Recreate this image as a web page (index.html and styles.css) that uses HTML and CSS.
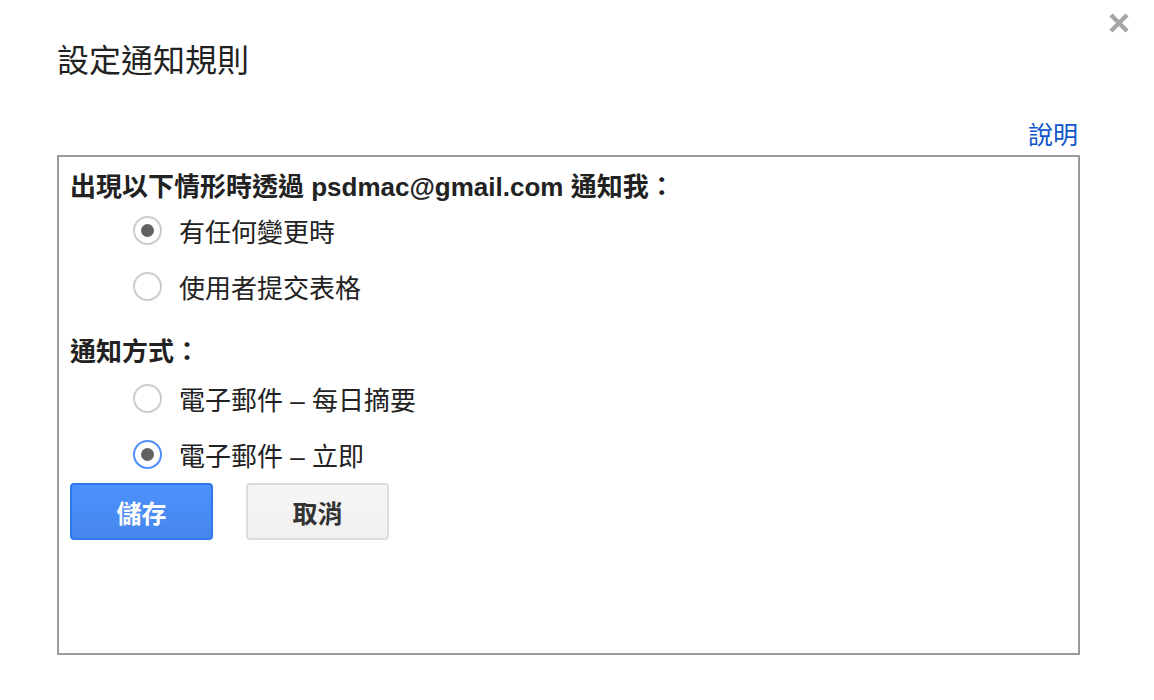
FILE: index.html
```html
<!DOCTYPE html>
<html lang="zh-Hant">
<head>
<meta charset="utf-8">
<title>設定通知規則</title>
<link rel="stylesheet" href="styles.css">
</head>
<body>
<div class="dialog">
  <button class="close" aria-label="關閉">
    <svg width="22" height="22" viewBox="0 0 22 22"><path d="M3 3 L19 19 M19 3 L3 19" stroke="#a6a6a6" stroke-width="4.5" stroke-linecap="butt"/></svg>
  </button>
  <h1 class="title">設定通知規則</h1>
  <div class="help-row"><a class="help" href="#">說明</a></div>
  <div class="box">
    <div class="heading">出現以下情形時透過 <span class="email">psdmac@gmail.com</span> 通知我：</div>
    <label class="option"><span class="radio checked"></span><span class="label">有任何變更時</span></label>
    <label class="option"><span class="radio"></span><span class="label">使用者提交表格</span></label>
    <div class="heading heading-2">通知方式：</div>
    <label class="option"><span class="radio"></span><span class="label">電子郵件 – 每日摘要</span></label>
    <label class="option"><span class="radio checked focused"></span><span class="label">電子郵件 – 立即</span></label>
    <div class="buttons">
      <button class="btn btn-primary">儲存</button>
      <button class="btn btn-default">取消</button>
    </div>
  </div>
</div>
</body>
</html>
```
FILE: styles.css
```css
html, body {
  margin: 0;
  padding: 0;
  background: #fff;
}
body {
  font-family: "Liberation Sans", "Noto Sans CJK TC", Arial, sans-serif;
  color: #222;
}
.dialog {
  position: relative;
  padding: 0 74px 0 57px;
}
.close {
  position: absolute;
  top: 12px;
  right: 24px;
  width: 22px;
  height: 22px;
  padding: 0;
  border: 0;
  background: none;
  cursor: pointer;
}
.close svg { display: block; }
.title {
  margin: 0;
  padding-top: 41px;
  font-size: 32px;
  line-height: 40px;
  font-weight: normal;
  color: #222;
}
.help-row {
  margin-top: 40px;
  height: 34px;
  text-align: right;
}
.help {
  margin-right: 2px;
  font-size: 25px;
  line-height: 28px;
  color: #1155cc;
  text-decoration: none;
}
.box {
  box-sizing: border-box;
  height: 500px;
  border: 2px solid #9a9a9a;
  padding: 15px 11px 0;
}
.heading {
  font-size: 26px;
  line-height: 30px;
  font-weight: bold;
  color: #222;
  white-space: nowrap;
}
.heading-2 {
  margin-top: 23px;
  margin-bottom: 3px;
}
.option {
  display: flex;
  align-items: center;
  height: 56px;
  padding-left: 63px;
  font-size: 26px;
  color: #222;
}
.radio {
  box-sizing: border-box;
  position: relative;
  width: 29px;
  height: 29px;
  border: 2px solid #cdcdcd;
  border-radius: 50%;
  background: #fff;
  flex: none;
  margin-right: 17px;
}
.radio.checked::after {
  content: "";
  position: absolute;
  left: 50%;
  top: 50%;
  width: 13px;
  height: 13px;
  margin: -6.5px 0 0 -6.5px;
  border-radius: 50%;
  background: #616161;
}
.radio.focused {
  border-color: #4d90fe;
}
.buttons {
  display: flex;
  gap: 33px;
  margin-top: 1px;
}
.btn {
  box-sizing: border-box;
  width: 143px;
  height: 57px;
  border-radius: 4px;
  font-family: "Noto Sans CJK TC", sans-serif;
  font-size: 25px;
  font-weight: bold;
  padding: 0;
  cursor: pointer;
}
.btn-primary {
  border: 2px solid #3079ed;
  background: linear-gradient(#4d90fe, #4787ed);
  color: #fff;
}
.btn-default {
  border: 2px solid #dcdcdc;
  background: linear-gradient(#f5f5f5, #f1f1f1);
  color: #333;
}
```
